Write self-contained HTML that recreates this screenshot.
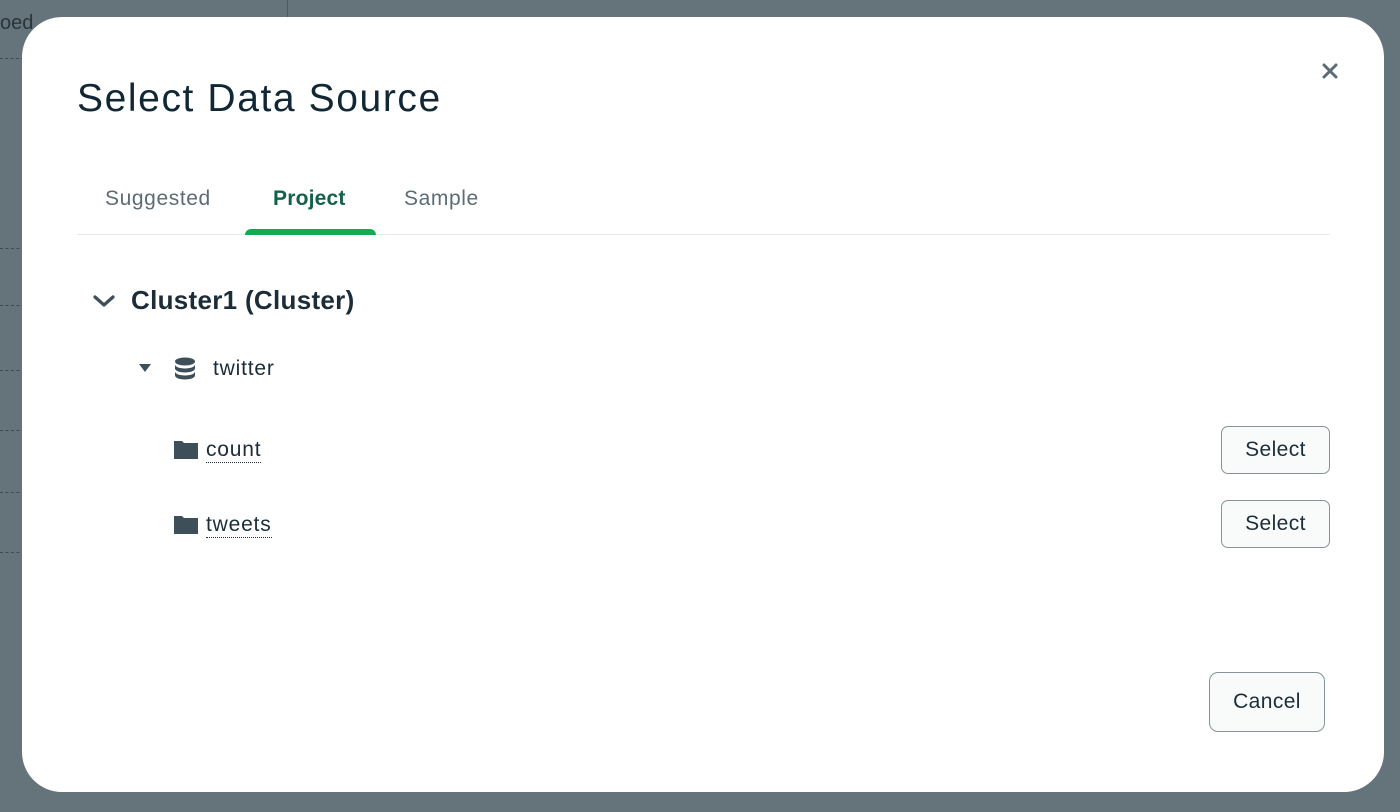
<!DOCTYPE html>
<html><head><style>
*{box-sizing:border-box;margin:0;padding:0}
body{width:1400px;height:812px;background:#65737b;font-family:"Liberation Sans",sans-serif;position:relative;overflow:hidden;color:#1c2d38}
.bgline{position:absolute;border-color:#4e5b63}
.modal{position:absolute;left:22px;top:17px;width:1362px;height:775px;background:#fff;border-radius:40px}
h1{position:absolute;left:55px;top:60px;font-size:39px;font-weight:normal;color:#112733;letter-spacing:1.6px}
.close{position:absolute;left:1300px;top:46px}
.tabs{position:absolute;left:55px;top:165px;width:1253px;height:53px;border-bottom:1px solid #e6e9eb}
.tab{position:absolute;top:5px;font-size:21px;color:#5c6c75;letter-spacing:0.6px}
.tab.act{color:#136149;font-weight:bold;letter-spacing:0.2px}
.ul{position:absolute;left:168px;bottom:-1px;width:131px;height:6px;background:#13aa52;border-radius:6px 6px 0 0}
.t{position:absolute;font-size:21px;color:#1c2d38;letter-spacing:0.8px}
.dot{border-bottom:1px dotted #1c2d38;padding-bottom:1px}
.btn{position:absolute;border:1px solid #889397;border-radius:7px;background:#f9fbfb;font-size:21px;color:#1c2d38;display:flex;align-items:center;justify-content:center;letter-spacing:0.4px}
</style></head><body>
<div class="bgline" style="left:0;top:58px;width:40px;border-top:1px dashed #3e4a51"></div>
<div class="bgline" style="left:0;top:248px;width:25px;border-top:1px dashed #3e4a51"></div>
<div class="bgline" style="left:0;top:305px;width:25px;border-top:1px dashed #3e4a51"></div>
<div class="bgline" style="left:0;top:370px;width:25px;border-top:1px dashed #3e4a51"></div>
<div class="bgline" style="left:0;top:430px;width:25px;border-top:1px dashed #3e4a51"></div>
<div class="bgline" style="left:0;top:492px;width:25px;border-top:1px dashed #3e4a51"></div>
<div class="bgline" style="left:0;top:552px;width:25px;border-top:1px dashed #3e4a51"></div>
<div style="position:absolute;left:0;top:12px;font-size:20px;color:#2a353b">oed</div>
<div style="position:absolute;left:287px;top:0;width:30px;height:17px;border-left:1px solid #4e5b63"></div>
<div class="modal">
<h1>Select Data Source</h1>
<svg class="close" width="16" height="16" viewBox="0 0 16 16"><path d="M2 2L14 14M14 2L2 14" stroke="#5c6c75" stroke-width="3" stroke-linecap="round"/></svg>
<div class="tabs">
<div class="tab" style="left:28px">Suggested</div>
<div class="tab act" style="left:196px">Project</div>
<div class="tab" style="left:327px">Sample</div>
<div class="ul"></div>
</div>
<svg style="position:absolute;left:70px;top:276px" width="24" height="16" viewBox="0 0 24 16"><path d="M3 4L12 12L21 4" stroke="#3d4f58" stroke-width="3.2" fill="none" stroke-linecap="round" stroke-linejoin="round"/></svg>
<div class="t" style="left:109px;top:268px;font-size:26px;font-weight:bold;letter-spacing:0.3px">Cluster1 (Cluster)</div>
<svg style="position:absolute;left:116px;top:346px" width="14" height="10"><path d="M1 1H13L7 9Z" fill="#3d4f58"/></svg>
<svg style="position:absolute;left:152px;top:340px" width="22" height="24" viewBox="0 0 22 24"><ellipse cx="11" cy="4.5" rx="10" ry="4" fill="#3d4f58"/><path d="M1 7.5v4c0 2.2 4.5 4 10 4s10-1.8 10-4v-4c0 2.2-4.5 4-10 4S1 9.7 1 7.5z" fill="#3d4f58"/><path d="M1 14.5v4c0 2.2 4.5 4 10 4s10-1.8 10-4v-4c0 2.2-4.5 4-10 4S1 16.7 1 14.5z" fill="#3d4f58"/></svg>
<div class="t" style="left:191px;top:340px">twitter</div>
<svg style="position:absolute;left:152px;top:422px" width="24" height="20"><path d="M0 2h8l2 2h14v16H0z" fill="#3d4f58"/></svg>
<div class="t" style="left:184px;top:421px"><span class="dot">count</span></div>
<svg style="position:absolute;left:152px;top:497px" width="24" height="20"><path d="M0 2h8l2 2h14v16H0z" fill="#3d4f58"/></svg>
<div class="t" style="left:184px;top:496px"><span class="dot">tweets</span></div>
<div class="btn" style="left:1199px;top:409px;width:109px;height:48px">Select</div>
<div class="btn" style="left:1199px;top:483px;width:109px;height:48px">Select</div>
<div class="btn" style="left:1187px;top:655px;width:116px;height:60px;border-radius:9px">Cancel</div>
</div>
</body></html>
